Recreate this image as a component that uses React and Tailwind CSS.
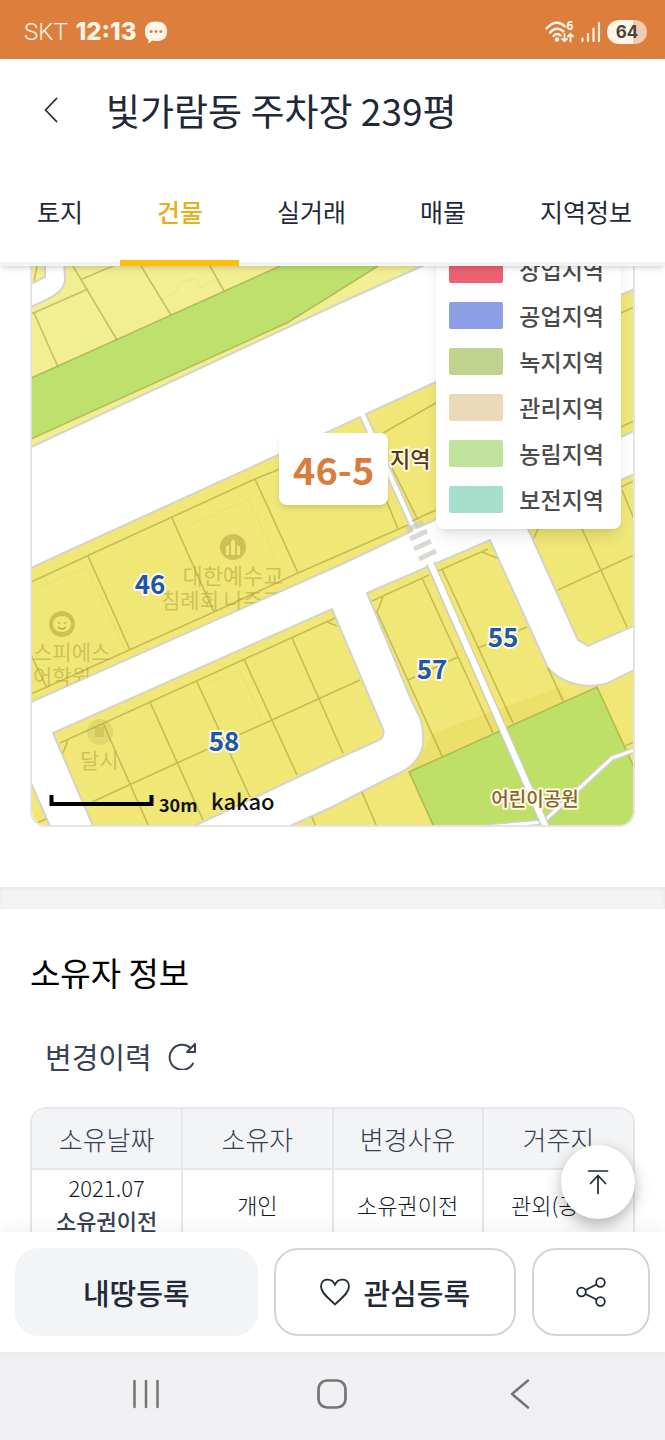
import React, { useState } from "react";

const tabs = ["토지", "건물", "실거래", "매물", "지역정보"];

const zones = [
  { name: "상업지역", color: "bg-[#ec6273]" },
  { name: "공업지역", color: "bg-[#8c9ee6]" },
  { name: "녹지지역", color: "bg-[#c1d48d]" },
  { name: "관리지역", color: "bg-[#ebd9b9]" },
  { name: "농림지역", color: "bg-[#bfe39c]" },
  { name: "보전지역", color: "bg-[#a5decb]" },
];

const history = [
  { date: "2021.07", type: "소유권이전", owner: "개인", reason: "소유권이전", address: "관외(공유)" },
];

// Outline of the block around lot 46, also used to clip the place names on it
const BLOCK_46 = "M20 573L70 550L278 455L360 417L412 531L340 565L31 702L20 707Z";
const BLOCK_58 = "M53 733L332 609L383 729Q385 737 379 740L330 762L192 827L180 833H96Z";

function StatusBar() {
  return (
    <div className="flex h-[59px] shrink-0 items-center justify-between bg-[#de7e3c] pl-6 pr-[18px] pt-1 font-['Open_Sans',sans-serif] text-[#fff6ea]">
      <div className="flex items-center gap-2">
        <span className="font-['Roboto',sans-serif] text-[24px] leading-7 font-light">SKT</span>
        <span className="font-['Inter',sans-serif] text-[24px] leading-7 font-extrabold">12:13</span>
        <svg className="h-6 w-6" viewBox="0 0 24 24">
          <path d="M12 1.500C19 1.500 23 4.500 23 11.500S19 21 12 21C10.500 21 9 21 8 20.600Q6.500 23 4 23.300Q4.800 21.500 4.400 19.500C2 18 1 15.500 1 11.500C1 4.500 5 1.500 12 1.500Z" fill="currentColor" />
          <circle cx="7.200" cy="11.500" r="1.500" fill="#de7e3c" />
          <circle cx="12" cy="11.500" r="1.500" fill="#de7e3c" />
          <circle cx="16.800" cy="11.500" r="1.500" fill="#de7e3c" />
        </svg>
      </div>
      <div className="flex items-center gap-1">
        <svg className="h-6 w-[30px]" viewBox="0 0 30 24" fill="none" stroke="currentColor" strokeWidth="2.400" strokeLinecap="round">
          <path d="M1.500 8.500Q11 -2 20 6.500" />
          <path d="M5 12.500Q11.500 5.500 18.500 11.500" />
          <path d="M8.500 16Q12 12.500 15.500 15.500" />
          <circle cx="12" cy="19.500" r="1" fill="currentColor" />
          <path d="M19.500 14V21M17 18.800L19.500 21.300L22 18.800M25.500 21.500V14M23 16.300L25.500 13.800L28 16.300" strokeWidth="1.800" />
          <text x="21.500" y="10" fontSize="12" fontWeight="700" fill="currentColor" stroke="none">6</text>
        </svg>
        <svg className="h-6 w-6" viewBox="0 0 24 24" fill="none" stroke="currentColor" strokeWidth="2.200" strokeLinecap="round">
          <path d="M3.500 18.500V21M9 14V21M14.500 8.500V21M20 3V21" />
        </svg>
        <span className="flex h-6 w-10 items-center justify-center rounded-full bg-linear-to-r from-[#fff6ea] from-65% to-[#f3ccb0] to-65% font-['Inter',sans-serif] text-[17px] leading-6 font-bold text-[#4a4440]">
          64
        </span>
      </div>
    </div>
  );
}

function Header() {
  const [active, setActive] = useState("건물");

  return (
    <header className="relative z-10 shrink-0 bg-white shadow-md">
      <div className="flex h-[104px] items-center gap-10 pb-0.5 pl-[38px]">
        <button aria-label="뒤로" className="text-[#1f2937]">
          <svg className="h-7 w-7" viewBox="0 0 28 28" fill="none" stroke="currentColor" strokeWidth="1.800" strokeLinecap="round" strokeLinejoin="round">
            <path d="M18.500 2.500L7.500 14L18.500 25.500" />
          </svg>
        </button>
        <h1 className="text-[37px] leading-[44px] whitespace-nowrap text-[#1f2937]">빛가람동 주차장 239평</h1>
      </div>
      <nav className="flex overflow-hidden border-b-4 border-[#f3f4f6]">
        {tabs.map((tab) => (
          <button
            key={tab}
            onClick={() => setActive(tab)}
            className={`h-[99px] shrink-0 px-[37px] pb-1 text-[25px] leading-9 ${
              tab === active ? "font-medium text-[#e5b01c]" : "text-[#1f2937]"
            }`}
          >
            {tab}
          </button>
        ))}
      </nav>
      <div className="absolute bottom-0 left-[120px] h-[6px] w-[119px] bg-[#fabd14]" />
    </header>
  );
}

function ParcelMap() {
  return (
    <svg className="h-[559px] w-full" viewBox="32 266 601 559" preserveAspectRatio="xMidYMin slice">
      <defs>
        <clipPath id="clip46">
          <path d={BLOCK_46} />
        </clipPath>
        <clipPath id="clip58">
          <path d={BLOCK_58} />
        </clipPath>
      </defs>
      <rect x="0" y="200" width="700" height="700" fill="#fff" />

      {/* north-west block with the green belt */}
      <g stroke="#d6d3c8" strokeWidth="2">
        <path d="M20 255H447L422 266L340 303L31 447L20 452Z" fill="#f2ee94" />
        <path d="M20 312L31 307L46 300Q65 291 65 279L64 260H45V277L31 284L20 289Z" fill="#fff" />
      </g>
      <path d="M20 383L31 378L280 266L300 255H395L378 266L340 290L287 323L31 439L20 444Z" fill="#bee16e" />
      <g fill="none" stroke="#8f8a2e" strokeOpacity=".45" strokeWidth="1.600">
        <path d="M20 383L31 378L280 266M378 266L340 290L287 323L31 439" />
        <path d="M31 314L88 289M34 313L58 367M73 266L117 340M82 279L113 266M141 266L171 315M210 266L224 291M37 266L34 281" />
      </g>

      {/* residential blocks */}
      <g fill="#f1e777" stroke="#d6d3c8" strokeWidth="2">
        <path d={BLOCK_46} />
        <path d="M366 414L436 382L621 295L645 284V426L621 437L417 528Z" />
        <path d="M524 520L621 480L645 469V621L588 646L578 640Z" />
        <path d={BLOCK_58} />
        <path d="M20 760L31 783L53 833H20Z" />
        <path d="M367 593L490 540L548 668Q558 679 572 683Q590 689 608 683L634 670L645 665V835H270L330 808L393 776Q419 766 423 745Q424 730 420 718L410 697Z" />
      </g>
      <path d="M433 733L560 687L567 700L409 772L420 756Z" fill="#ebe069" />
      <path d="M409 772L597 687L634 767L662 835H437Z" fill="#bee067" />

      <g fill="none" stroke="#8f8a2e" strokeOpacity=".45" strokeWidth="1.600">
        <path d="M31 582L100 550L255 479L300 461M31 694L214 612L298 573L408 525M88 556L130 650M31 655L47 688M172 518L214 612M255 479L298 573M359 433L398 529" />
        <path d="M383 433L436 403M392 468L418 520M412 521L436 510M621 313L634 307M621 427L634 421" />
        <path d="M621 487L634 481M622 490L634 519M534 538L538 529M582 529L627 627M558 590L634 555" />
        <path d="M60 743L335 618M103 723L149 827M150 702L203 820M197 682L250 797M244 659L297 775M292 638L343 753M92 802L177 763L272 720L360 680M68 740L63 753M327 622L337 626M37 823L46 819" />
        <path d="M372 601L429 575M438 571L488 549M422 578L493 733M442 569L513 723M482 552L497 558M383 597L377 612L442 756M408 680L458 657M478 648L527 627M548 668L563 701M362 792L377 827M312 817L316 827" />
        <path d="M434 827L409 772L597 687L634 767M625 746L634 742" />
      </g>

      {/* footpaths */}
      <g fill="none" strokeLinejoin="round">
        <path d="M463 829L543 822L612 758L640 748" stroke="#d0d0cb" strokeWidth="6" />
        <path d="M463 829L543 822L612 758L640 748" stroke="#fff" strokeWidth="3" />
        <path d="M430 563L502 727L547 830" stroke="#cfcdc3" strokeWidth="9" />
        <path d="M429 560L502 727L548 832" stroke="#fff" strokeWidth="6" />
      </g>
      <path d="M407 530L423 522M410 539L427 531M414 549L431 541M419 559L436 551" stroke="#c9c8c2" strokeOpacity=".7" strokeWidth="5" />

      {/* faded building outlines */}
      <path d="M187 526L249 499L274 556M29 592L87 567L128 656M205 684L240 670L263 722M160 300L175 293L180 283L196 278L201 288L214 280" fill="none" stroke="#ddd25e" strokeOpacity=".35" />

      {/* place names under the zoning layer */}
      <g clipPath="url(#clip46)" fill="#aea23a" fillOpacity=".55" fontSize="21">
        <circle cx="233" cy="547" r="13" />
        <path d="M226 555V547L229 545V555ZM231 555V542L233 539L235 542V555ZM237 555V545L240 547V555Z" fill="#f1e777" fillOpacity="1" />
        <text x="233" y="584" textAnchor="middle" fontSize="22">대한예수교</text>
        <text x="161" y="608">침례회 나주교</text>
        <circle cx="62" cy="624" r="13" fill="#a3aa35" />
        <path d="M53 624Q54 616 62 616T71 624Q70 632 62 632T53 624Z" fill="#f1e777" fillOpacity="1" />
        <circle cx="59" cy="623" r="1.300" />
        <circle cx="65" cy="623" r="1.300" />
        <path d="M58 627Q62 631 66 627" fill="none" stroke="#b9ae45" strokeWidth="1.500" />
        <text x="33" y="660">스피에스</text>
        <text x="33" y="684">어학원</text>
      </g>
      <g clipPath="url(#clip58)" fill="#aea23a">
        <circle cx="100" cy="732" r="13" fillOpacity=".2" />
        <rect x="95" y="727" width="9" height="10" fillOpacity=".3" />
        <text x="80" y="768" fontSize="21" fillOpacity=".55">달시</text>
      </g>

      {/* lot numbers */}
      <g fill="#1d57a8" stroke="#fff" strokeOpacity=".85" strokeWidth="4" strokeLinejoin="round" paintOrder="stroke" fontSize="26" fontWeight="700" textAnchor="middle">
        <text x="150" y="594">46</text>
        <text x="224" y="751">58</text>
        <text x="432" y="679">57</text>
        <text x="503" y="647">55</text>
      </g>
      <g stroke="#fffbe4" strokeWidth="4" strokeLinejoin="round" paintOrder="stroke" fontWeight="500">
        <text x="390" y="467" fontSize="22" fill="#5a3517">지역</text>
        <text x="535" y="806" fontSize="19" fill="#856330" textAnchor="middle">어린이공원</text>
      </g>

      {/* scale */}
      <path d="M51.500 795V804H151.500V795" fill="none" stroke="#000" strokeWidth="4" />
      <text x="159" y="812" fontSize="18" fontWeight="700" fill="#111">30m</text>
      <text x="211" y="810" fontSize="22" fontWeight="500" fill="#111">kakao</text>
    </svg>
  );
}

function ZoneLegend() {
  return (
    <ul className="absolute right-[14px] bottom-[298px] flex flex-col rounded-lg bg-white px-[13px] pb-[7px] shadow-lg">
      {zones.map((zone) => (
        <li key={zone.name} className="flex h-[46px] items-center gap-4">
          <span className={`h-[27px] w-[54px] rounded-xs ${zone.color}`} />
          <span className="pr-1 text-[23px] leading-8 font-medium whitespace-nowrap text-[#4b4b4b]">{zone.name}</span>
        </li>
      ))}
    </ul>
  );
}

function OwnerTable() {
  return (
    <div className="overflow-hidden rounded-t-2xl border-x-2 border-t-2 border-[#e5e7eb]">
      <table className="w-full table-fixed border-collapse text-center font-light">
        <thead>
          <tr className="h-[60px] border-b-2 border-[#e5e7eb] bg-[#f3f4f6] text-[26px] leading-9 text-[#374151]">
            <th className="border-r-2 border-[#e5e7eb] font-light">소유날짜</th>
            <th className="border-r-2 border-[#e5e7eb] font-light">소유자</th>
            <th className="border-r-2 border-[#e5e7eb] font-light">변경사유</th>
            <th className="font-light">거주지</th>
          </tr>
        </thead>
        <tbody>
          {history.map((row) => (
            <tr key={row.date} className="border-b-2 border-[#e5e7eb] text-[22px] leading-[33px] text-[#111827]">
              <td className="border-r-2 border-[#e5e7eb] py-px">
                {row.date}
                <div className="font-medium text-[#374151]">{row.type}</div>
              </td>
              <td className="border-r-2 border-[#e5e7eb]">{row.owner}</td>
              <td className="border-r-2 border-[#e5e7eb]">{row.reason}</td>
              <td>{row.address}</td>
            </tr>
          ))}
        </tbody>
      </table>
    </div>
  );
}

function BottomActions() {
  return (
    <div className="relative z-10 flex shrink-0 gap-4 bg-white px-[15px] py-4 text-[29px] leading-10 font-medium text-[#1f2937] shadow-[0_-4px_16px_rgba(0,0,0,0.06)]">
      <button className="h-[88px] flex-1 rounded-3xl border-2 border-[#f3f4f6] bg-[#f3f4f6]">내땅등록</button>
      <button className="flex h-[88px] flex-1 items-center justify-center gap-3 rounded-3xl border-2 border-[#d1d5db]">
        <svg className="h-8 w-8" viewBox="0 0 32 32" fill="none" stroke="currentColor" strokeWidth="1.800" strokeLinejoin="round">
          <path d="M16 28.500C11 23 2 17.500 2 10.500C2 1.500 13.500 1.500 16 9C18.500 1.500 30 1.500 30 10.500C30 17.500 21 23 16 28.500Z" />
        </svg>
        관심등록
      </button>
      <button aria-label="공유" className="flex h-[88px] w-[118px] items-center justify-center rounded-3xl border-2 border-[#d1d5db]">
        <svg className="h-8 w-8" viewBox="0 0 32 32" fill="none" stroke="currentColor" strokeWidth="1.800">
          <circle cx="6.500" cy="16" r="4.300" />
          <circle cx="25.500" cy="6.500" r="4.300" />
          <circle cx="25.500" cy="25.500" r="4.300" />
          <path d="M10.500 14L21.500 8.500M10.500 18L21.500 23.500" />
        </svg>
      </button>
    </div>
  );
}

function SystemNav() {
  return (
    <div className="flex h-[88px] shrink-0 items-center justify-around bg-[#f0f0f2] px-[53px] pb-1 text-[#747476]">
      <button aria-label="최근 앱">
        <svg className="h-8 w-8" viewBox="0 0 32 32" fill="none" stroke="currentColor" strokeWidth="2.500" strokeLinecap="round">
          <path d="M4.500 3V29M16 3V29M27.500 3V29" />
        </svg>
      </button>
      <button aria-label="홈">
        <svg className="h-8 w-8" viewBox="0 0 32 32" fill="none" stroke="currentColor" strokeWidth="2.700">
          <rect x="2.500" y="2.500" width="27" height="27" rx="8.500" />
        </svg>
      </button>
      <button aria-label="뒤로 가기">
        <svg className="h-8 w-8" viewBox="0 0 32 32" fill="none" stroke="currentColor" strokeWidth="2.500" strokeLinecap="round" strokeLinejoin="round">
          <path d="M25 2.500L9 16L25 29.500" />
        </svg>
      </button>
    </div>
  );
}

function App() {
  return (
    <div className="flex h-screen flex-col overflow-hidden bg-white font-['Noto_Sans_CJK_KR',sans-serif] text-black">
      <StatusBar />
      <Header />

      <main className="relative min-h-0 flex-1 overflow-hidden">
        <section className="px-[30px] pb-[60px]">
          <div className="relative">
            <div className="overflow-hidden rounded-b-2xl border-x-2 border-b-2 border-[#e3e4e6]">
              <ParcelMap />
            </div>
            <div className="absolute top-[167px] left-[249px] rounded-lg bg-white px-[14px] py-3 text-[38px] leading-[48px] font-bold text-[#d97d3e] shadow-md">
              46-5
            </div>
            <ZoneLegend />
          </div>
        </section>

        <div className="h-[22px] bg-[#f2f3f5] inset-shadow-sm" />

        <section className="px-[30px] pt-10">
          <h2 className="text-[33px] leading-[46px]">소유자 정보</h2>
          <div className="mt-[41px] flex items-center gap-4 pl-[15px] text-[29px] leading-10 text-[#374151]">
            <h3>변경이력</h3>
            <button aria-label="새로고침">
              <svg className="h-7 w-7" viewBox="0 0 28 28" fill="none" stroke="currentColor" strokeWidth="2" strokeLinecap="round" strokeLinejoin="round">
                <path d="M25 21.500A12.500 12.500 0 1 1 22.500 6" />
                <path d="M27 2V10H19Z" />
              </svg>
            </button>
          </div>
          <div className="mt-[31px]">
            <OwnerTable />
          </div>
        </section>

        <button aria-label="맨 위로" className="absolute right-[30px] bottom-[13px] flex h-[74px] w-[74px] items-center justify-center rounded-full bg-white text-[#1f2937] shadow-[0_6px_16px_rgba(0,0,0,0.3)]">
          <svg className="h-7 w-7" viewBox="0 0 28 28" fill="none" stroke="currentColor" strokeWidth="1.700" strokeLinecap="round" strokeLinejoin="round">
            <path d="M4.500 3H23.500M14 25.500V7.500M6.500 15.500L14 7.500L21.500 15.500" />
          </svg>
        </button>
      </main>

      <BottomActions />
      <SystemNav />
    </div>
  );
}

export default App;
